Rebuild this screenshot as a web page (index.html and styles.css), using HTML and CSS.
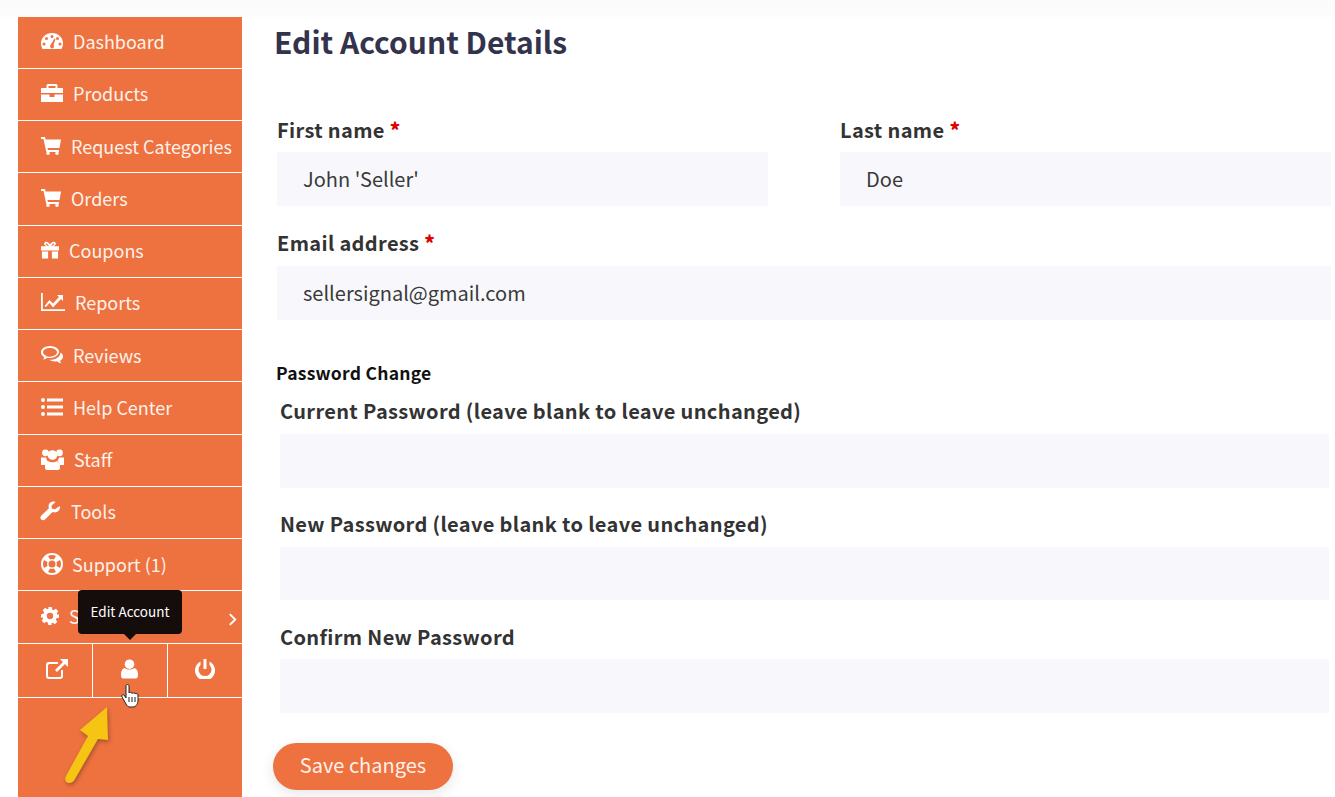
FILE: index.html
```html
<!DOCTYPE html>
<html lang="en">
<head>
<meta charset="utf-8">
<title>Edit Account Details</title>
<link rel="stylesheet" href="styles.css">
</head>
<body>
<div class="topstrip"></div>
<div class="page">
  <nav class="sidebar">
    <a class="nav-item"><svg class="ic w22" viewBox="0 0 22 18"><path fill-rule="evenodd" d="M11 1C5 1 0 5.600 0 11.500c0 2 .6 3.900 1.600 5.500h18.800c1-1.600 1.600-3.500 1.600-5.500C22 5.600 17 1 11 1zM11 3a1.500 1.500 0 1 1 0 3 1.500 1.500 0 0 1 0-3zM5.500 5a1.500 1.500 0 1 1 0 3 1.500 1.500 0 0 1 0-3zM16.500 5a1.500 1.500 0 1 1 0 3 1.500 1.500 0 0 1 0-3zM3 10.500a1.500 1.500 0 1 1 0 3 1.500 1.500 0 0 1 0-3zM19 10.500a1.500 1.500 0 1 1 0 3 1.500 1.500 0 0 1 0-3zM13.500 6.500l1 .4-2 6a2 2 0 1 1-3 .1z"/></svg><span>Dashboard</span></a>
    <a class="nav-item"><svg class="ic w22" viewBox="0 0 22 18"><path d="M7 0h8a1.500 1.500 0 0 1 1.500 1.500V4H22v5H0V4h5.500V1.500A1.500 1.500 0 0 1 7 0zm.5 2v2h7V2zM0 10.500h8.500V13h5v-2.500H22V18H0z"/></svg><span>Products</span></a>
    <a class="nav-item"><svg class="ic w20" viewBox="0 0 20 18"><path d="M0 0h4l.6 2.500H20l-1.500 8.500H6.500l.4 2H18v2H5.300L2.500 2H0z"/><circle cx="7" cy="16.300" r="1.700"/><circle cx="16" cy="16.300" r="1.700"/></svg><span>Request Categories</span></a>
    <a class="nav-item"><svg class="ic w20" viewBox="0 0 20 18"><path d="M0 0h4l.6 2.500H20l-1.500 8.500H6.500l.4 2H18v2H5.300L2.500 2H0z"/><circle cx="7" cy="16.300" r="1.700"/><circle cx="16" cy="16.300" r="1.700"/></svg><span>Orders</span></a>
    <a class="nav-item"><svg class="ic gift" viewBox="0 0 19 18"><path fill-rule="evenodd" d="M0 5h6C3.500 4 3 2.800 3.500 1.600 4.200 0 6.500-.2 8 1.300L9.500 3 11 1.300C12.500-.2 14.800 0 15.500 1.600 16 2.800 15.500 4 13 5h6v4.500H0zM5.300 2.300c-.5.500 0 1.700 2.700 2.700H8.300L7 3c-.6-.8-1.300-1-1.700-.7zM13.700 2.300c-.4-.3-1.100-.1-1.700.7L10.700 5h.3c2.700-1 3.200-2.200 2.700-2.700z"/><path d="M1 10.500h6.500V18H1zM11.500 10.500H18V18h-6.500z"/></svg><span>Coupons</span></a>
    <a class="nav-item"><svg class="ic w24" viewBox="0 0 24 18"><path d="M0 0h1.800v16.200H24V18H0z"/><path d="M3.500 13l5-6 3.500 3.500L18 4l-2-2h6v6l-2-2-8 8.500L8.500 10l-3.500 4z"/></svg><span>Reports</span></a>
    <a class="nav-item"><svg class="ic w22" viewBox="0 0 22 18"><path fill-rule="evenodd" d="M9 0C4 0 0 2.800 0 6.300c0 2 1.300 3.800 3.300 4.900-.3.900-.8 1.700-1.400 2.400 1.700-.3 3.200-1 4.400-1.900.9.200 1.800.3 2.700.3 5 0 9-2.800 9-6.700C18 2.800 14 0 9 0zm0 2C12.900 2 16 4 16 6.300s-3.100 4.400-7 4.400c-1 0-2-.1-3-.5l-1.200.8.400-1.300C3.200 8.800 2 7.600 2 6.300 2 4 5.100 2 9 2z"/><path d="M19.500 6.500c1.500 1 2.500 2.400 2.500 4 0 1.800-1.200 3.300-3 4.200.2.900.7 1.700 1.400 2.500-1.800-.3-3.300-1-4.400-2-3 .5-5.800-.1-7.500-1.400 5.500.3 11-2.500 11-7.300z"/></svg><span>Reviews</span></a>
    <a class="nav-item"><svg class="ic w22" viewBox="0 0 22 18"><path d="M0 2a2 2 0 1 1 4 0 2 2 0 0 1-4 0zM0 9a2 2 0 1 1 4 0 2 2 0 0 1-4 0zM0 16a2 2 0 1 1 4 0 2 2 0 0 1-4 0zM6 .5h16v3H6zM6 7.500h16v3H6zM6 14.500h16v3H6z"/></svg><span>Help Center</span></a>
    <a class="nav-item"><svg class="ic staff" viewBox="0 0 23 21"><circle cx="4.500" cy="3.800" r="3.400"/><circle cx="18.500" cy="3.800" r="3.400"/><circle cx="11.500" cy="6" r="4.800"/><path d="M0 8.500h5c.5 2 1 3 2.300 4-1.800.8-2.800 2-3.300 3.500H0zM23 8.500h-5c-.5 2-1 3-2.300 4 1.800.8 2.800 2 3.300 3.500h4zM7 12c2.500 1.700 6.500 1.700 9 0 2 1.200 3 3 3 5.500v1.500c0 1.200-.8 2-2 2H6c-1.200 0-2-.8-2-2v-1.500c0-2.500 1-4.300 3-5.500z"/></svg><span>Staff</span></a>
    <a class="nav-item"><svg class="ic tools" viewBox="0 0 20 19"><path d="M19.800 4.500c.5 2.500-.5 5-3 6-1.500.6-3 .5-4.300-.1L5 18.100c-1 1-2.700 1-3.800 0-1.100-1-1.100-2.700 0-3.800l7.700-7.600C8.300 5 8.400 3 9.600 1.800 11-.0 13.500-.5 15.500.4l-4 3.900.4 2.900 3 .5z"/></svg><span>Tools</span></a>
    <a class="nav-item"><svg class="ic support" viewBox="0 0 22 22"><path fill-rule="evenodd" d="M11 0a11 11 0 1 0 0 22 11 11 0 0 0 0-22zM7 3a9 9 0 0 1 8 0l-2 3.500a5 5 0 0 0-4 0zM3 7l3.500 2a5 5 0 0 0 0 4L3 15a9 9 0 0 1 0-8zM19 7a9 9 0 0 1 0 8l-3.500-2a5 5 0 0 0 0-4zM9 15.500a5 5 0 0 0 4 0l2 3.500a9 9 0 0 1-8 0zM11 7.500a3.500 3.500 0 1 1 0 7 3.500 3.500 0 0 1 0-7z"/></svg><span>Support (1)</span></a>
    <a class="nav-item settings"><svg class="ic gear" viewBox="0 0 20 20"><path fill-rule="evenodd" d="M8 0h4l.5 2.800 1.700.7 2.300-1.600 2.700 2.700-1.600 2.300.7 1.700L20 8v4l-2.800.5-.7 1.700 1.600 2.300-2.700 2.700-2.300-1.600-1.700.7L12 20H8l-.5-2.800-1.700-.7-2.300 1.600-2.700-2.700 1.600-2.300-.7-1.700L0 12V8l2.800-.5.7-1.700-1.600-2.300 2.700-2.700 2.300 1.600 1.700-.7zM10 6.500a3.500 3.500 0 1 0 0 7 3.500 3.500 0 0 0 0-7z"/></svg><span>Settings</span><svg class="chev" viewBox="0 0 8 12"><path d="M1.500 1l5 5-5 5" fill="none" stroke="currentColor" stroke-width="1.800"/></svg></a>
    <div class="nav-actions">
      <a class="action"><svg class="ic act1" viewBox="0 0 22 20"><path d="M3 3h9v2H3.500A1.500 1.500 0 0 0 2 6.500v10A1.500 1.500 0 0 0 3.500 18h10a1.500 1.500 0 0 0 1.500-1.500V11h2v6a3 3 0 0 1-3 3H3a3 3 0 0 1-3-3V6a3 3 0 0 1 3-3z"/><path d="M14 0h8v8l-3-3-8 8-2-2 8-8z"/></svg></a>
      <a class="action"><svg class="ic act2" viewBox="0 0 16 18"><circle cx="8" cy="4.500" r="4.500"/><path d="M3.500 8c2.500 2 6.500 2 9 0 2 .5 3.500 2.500 3.500 5.500v1.500c0 2-1.300 3-3 3H3c-1.700 0-3-1-3-3v-1.500C0 10.500 1.500 8.500 3.500 8z"/></svg></a>
      <a class="action"><svg class="ic act3" viewBox="0 0 20 20"><path d="M8.500 0h3v10h-3z"/><path d="M5.500 2.500v3.400a6.500 6.500 0 1 0 9 0V2.500a10 10 0 1 1-9 0z"/></svg></a>
    </div>
    <div class="tooltip">Edit Account</div>
    <svg class="hand" viewBox="0 0 18 24"><path d="M5 2c0-2 3-2 3 0v7c0-1 3-1 3 .5 0-1 3-1 3 .5 0-1 3-.5 3 1v5c0 3-1.500 7-5 7H9c-2 0-3-1-4-3L1 13c-1-2 1-3 2-2l2 3z" fill="#fff" stroke="#222" stroke-width="1"/><path d="M8 13v5M11 13v5M14 13v5" stroke="#222" stroke-width="1"/></svg>
    <svg class="arrow" viewBox="0 0 60 90"><path d="M47 7L20 30l8 6L6 76c-2 4 0 7 3 7 3 0 5-2 6-4l23-40 10 1z" fill="#f6c412"/></svg>
  </nav>
  <main class="content">
    <h1 class="title">Edit Account Details</h1>
    <form class="account-form">
      <div class="name-row">
        <div class="field"><label>First name <b>*</b></label><input class="input" value="John 'Seller'"></div>
        <div class="field"><label>Last name <b>*</b></label><input class="input" value="Doe"></div>
      </div>
      <div class="field email"><label>Email address <b>*</b></label><input class="input" value="sellersignal@gmail.com"></div>
      <div class="pw-title">Password Change</div>
      <div class="pw-group">
        <div class="field first"><label>Current Password (leave blank to leave unchanged)</label><input class="input" type="password"></div>
        <div class="field"><label>New Password (leave blank to leave unchanged)</label><input class="input short" type="password"></div>
        <div class="field"><label>Confirm New Password</label><input class="input" type="password"></div>
      </div>
      <button class="save" type="button">Save changes</button>
    </form>
  </main>
</div>
</body>
</html>
```
FILE: styles.css
```css
* { box-sizing: border-box; }
html, body { margin: 0; height: 797px; overflow: hidden; background: #fff; }
body { font-family: "Noto Sans CJK SC", "Noto Sans", sans-serif; color: #333; }
.topstrip { height: 16.700px; background: linear-gradient(#fbfbfc, #fdfdfd); }
.page { display: flex; height: 781px; padding-left: 18px; }
.sidebar { position: relative; width: 224px; flex: none; background: #ed7240; color: #fdf1ea; }
.nav-item { display: flex; align-items: center; height: 52.25px; padding-left: 23px; padding-bottom: 2.500px; border-bottom: 1px solid #fff; font-size: 18px; white-space: nowrap; }
.nav-item span { margin-left: 10px; }
.ic { fill: #fff; flex: none; display: block; }
.w20 { width: 20px; height: 18px; }
.w22 { width: 22px; height: 18px; }
.w24 { width: 24px; height: 18px; }
.gift { width: 18px; height: 18px; }
.staff { width: 23px; height: 21px; }
.tools { width: 20px; height: 20px; margin-left: -1px; margin-right: 1px; }
.support { width: 22px; height: 22px; margin-right: -1px; }
.gear { width: 18px; height: 18px; }
.settings { position: relative; }
.chev { position: absolute; right: 5px; top: 22px; width: 9px; height: 13px; color: #fff; }
.nav-actions { display: flex; height: 54px; border-bottom: 1px solid #fff; }
.action { flex: 1; display: flex; justify-content: center; padding-top: 15px; border-right: 1px solid #fff; }
.action:last-child { border-right: 0; }
.act1 { width: 22px; height: 20px; margin-left: 4px; }
.act2 { width: 17px; height: 20px; margin-right: 2px; }
.act3 { width: 20px; height: 20px; }
.tooltip { position: absolute; left: 60px; top: 573px; width: 104px; height: 44px; background: #150d0b; color: #fff; border-radius: 4px; font-size: 13.500px; line-height: 42px; text-align: center; }
.tooltip::after { content: ""; position: absolute; left: 46px; bottom: -6px; border: 6px solid transparent; border-bottom: 0; border-top-color: #150d0b; }
.hand { position: absolute; left: 103px; top: 667px; width: 18px; height: 24px; }
.arrow { position: absolute; left: 42px; top: 683px; width: 60px; height: 90px; filter: drop-shadow(1px 2px 2px rgba(0,0,0,.3)); }
.content { flex: 1; padding-left: 32px; min-width: 0; }
.title { margin: 0; font-size: 30px; line-height: 48px; font-weight: 700; color: #33334d; }
.account-form { margin: 51px 4px 0 3px; }
.name-row { display: grid; grid-template-columns: 491px 491px; column-gap: 72px; }
.field { display: flex; flex-direction: column; }
.field label { font-size: 20px; line-height: 28px; font-weight: 700; letter-spacing: .35px; color: #333; margin-bottom: 8px; }
.field label b { color: #e00000; }
.input { display: block; width: 100%; height: 54px; padding: 0 26px 1px; border: 0; border-radius: 0; background: #f8f8fc; font: 400 20px "Noto Sans CJK SC", "Noto Sans", sans-serif; color: #3a3a3a; outline: 0; }
.short { height: 53px; }
.email { margin-top: 23px; }
.email label { margin-bottom: 9px; }
.pw-title { margin: 41px 0 0 -1px; font-size: 17.500px; line-height: 24px; font-weight: 700; letter-spacing: .25px; color: #111; }
.pw-group { padding: 0 2px 0 3px; }
.pw-group .field { margin-top: 22px; }
.pw-group .field.first { margin-top: 12px; }
.pw-group .field label { margin-bottom: 9px; }
.pw-group .field:last-child { margin-top: 23px; }
.pw-group .field:last-child label { margin-bottom: 8px; }
.save { display: block; margin: 30px 0 0 -4px; width: 180px; height: 47px; border: 0; border-radius: 24px; background: #ed7240; color: #fdf1ea; font: 400 20px "Noto Sans CJK SC", "Noto Sans", sans-serif; box-shadow: 0 4px 14px rgba(0,0,0,.1); padding: 0 0 3px; }
```
